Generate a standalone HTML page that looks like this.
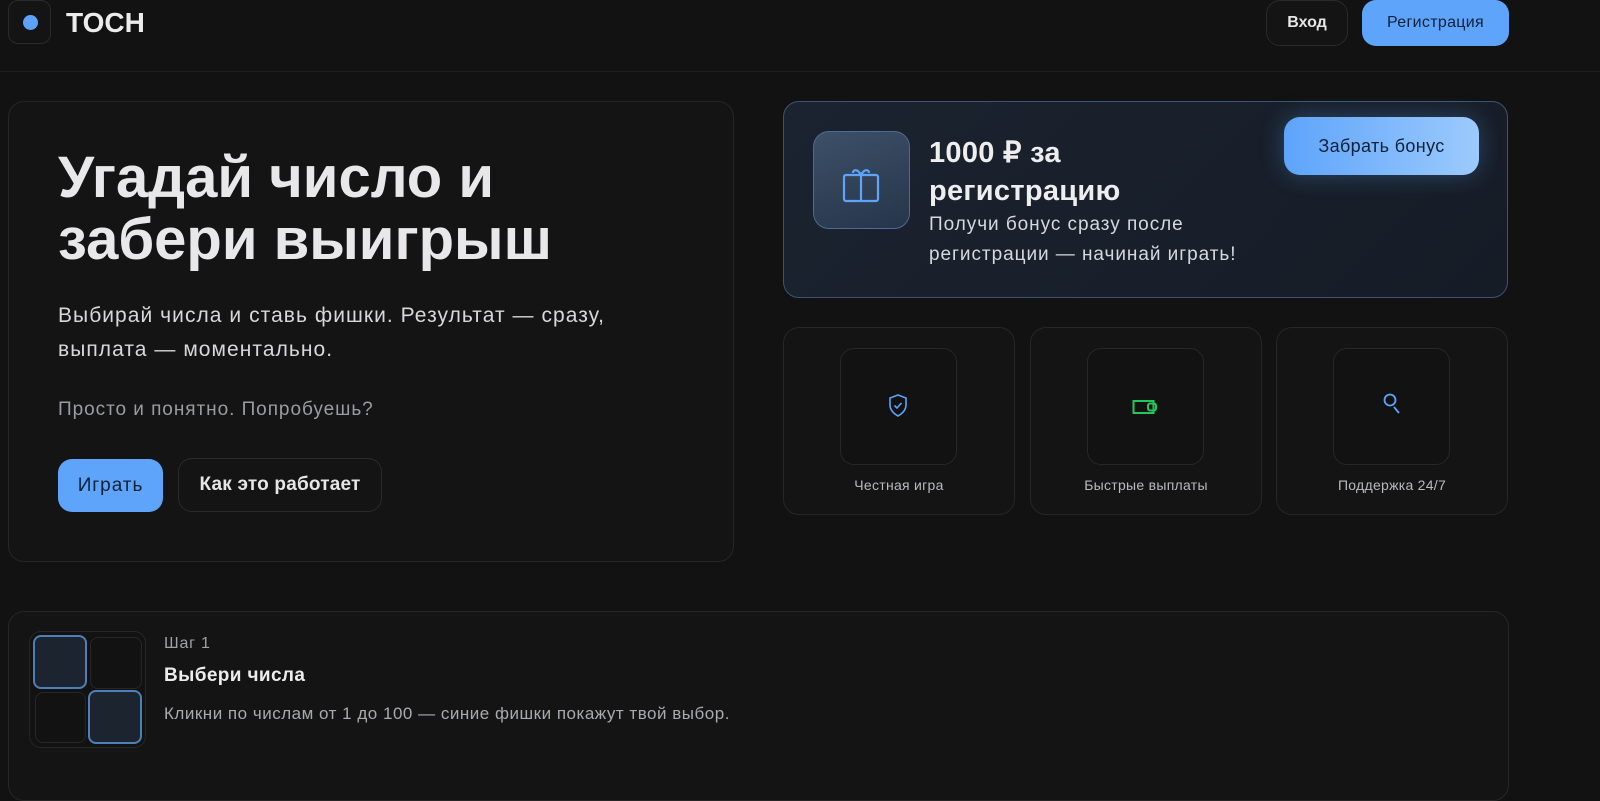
<!DOCTYPE html>
<html><head><meta charset="utf-8"><style>
*{box-sizing:border-box;margin:0;padding:0}
body{width:1600px;height:783px;overflow:hidden;background:#121212;font-family:"Liberation Sans",sans-serif;color:#e8e8ea;position:relative}
.a{position:absolute;letter-spacing:0.05em;white-space:nowrap}
.hdr{left:0;top:71px;width:1600px;height:1px;background:#1f1f1f}
.card{background:#141414;border:1px solid #262626;border-radius:16px}
.btn{display:flex;align-items:center;justify-content:center;border-radius:14px}
</style></head><body>
<div class="a" style="left:8px;top:0;width:43px;height:44px;border:1px solid #2a2a2a;border-radius:10px;background:#141414"></div>
<div class="a" style="left:23px;top:15px;width:15px;height:15px;border-radius:50%;background:#5aa2fa"></div>
<div class="a" style="left:66px;top:7px;font-size:28px;font-weight:bold;letter-spacing:0;color:#ececec">TOCH</div>
<div class="a btn" style="left:1266px;top:0;width:82px;height:46px;border:1px solid #2a2a2a;background:#141414;font-size:16px;font-weight:bold;letter-spacing:0;color:#e6e6e6">Вход</div>
<div class="a btn" style="left:1362px;top:0;width:147px;height:46px;background:#5ea4fb;font-size:16px;letter-spacing:0.02em;color:#10223a">Регистрация</div>
<div class="a hdr"></div>

<div class="a card" style="left:8px;top:101px;width:726px;height:461px"></div>
<div class="a" style="left:58px;top:147px;font-size:58px;font-weight:bold;line-height:62px;color:#e8e8ea;letter-spacing:0">Угадай число и<br>забери выигрыш</div>
<div class="a" style="left:58px;top:299px;font-size:21px;line-height:34px;color:#d8d8dc">Выбирай числа и ставь фишки. Результат — сразу,<br>выплата — моментально.</div>
<div class="a" style="left:58px;top:399px;font-size:19px;color:#9a9ca4">Просто и понятно. Попробуешь?</div>
<div class="a btn" style="left:58px;top:459px;width:105px;height:53px;background:#5ea4fb;font-size:19px;color:#10223a">Играть</div>
<div class="a btn" style="left:178px;top:458px;width:204px;height:54px;border:1px solid #2a2a2a;background:#141414;font-size:19px;font-weight:bold;letter-spacing:0.01em;color:#e6e6e6">Как это работает</div>

<div class="a" style="left:783px;top:101px;width:725px;height:197px;border:1px solid #3a5475;border-radius:16px;background:linear-gradient(135deg,#1b2330,#161c26)"></div>
<div class="a" style="left:813px;top:131px;width:97px;height:98px;border:1px solid #4d6a90;border-radius:16px;background:linear-gradient(160deg,#3d5068,#26354a)"></div>
<svg class="a" style="left:842px;top:167px" width="38" height="36" viewBox="0 0 38 36" fill="none" stroke="#5ea4fb" stroke-width="2.2"><rect x="2" y="8" width="34" height="26" rx="2"/><line x1="19" y1="8" x2="19" y2="34"/><path d="M19 8c-3-6-8-6-8-2M19 8c3-6 8-6 8-2"/></svg>
<div class="a" style="left:929px;top:134px;font-size:29px;font-weight:bold;line-height:38px;letter-spacing:0.01em;color:#eeeeee">1000 ₽ за<br>регистрацию</div>
<div class="a" style="left:929px;top:210px;font-size:19px;line-height:30px;color:#d6d8dc">Получи бонус сразу после<br>регистрации — начинай играть!</div>
<div class="a btn" style="left:1284px;top:117px;width:195px;height:58px;border-radius:16px;background:linear-gradient(90deg,#5ea4fb,#9ccafc);box-shadow:0 0 24px rgba(94,164,251,0.3);font-size:18px;letter-spacing:0.02em;color:#10223a">Забрать бонус</div>

<div class="a card" style="left:783px;top:327px;width:232px;height:188px"></div>
<div class="a card" style="left:1030px;top:327px;width:232px;height:188px"></div>
<div class="a card" style="left:1276px;top:327px;width:232px;height:188px"></div>
<div class="a" style="left:840px;top:348px;width:117px;height:117px;border:1px solid #272727;border-radius:14px;background:#121212"></div>
<div class="a" style="left:1087px;top:348px;width:117px;height:117px;border:1px solid #272727;border-radius:14px;background:#121212"></div>
<div class="a" style="left:1333px;top:348px;width:117px;height:117px;border:1px solid #272727;border-radius:14px;background:#121212"></div>
<svg class="a" style="left:888px;top:393px" width="20" height="25" viewBox="0 0 20 25" fill="none" stroke="#5ea4fb" stroke-width="1.6"><path d="M10 2l8 3v7c0 5-4 9-8 11-4-2-8-6-8-11V5z"/><path d="M6.5 12.5l2.5 2.5 4.5-5"/></svg>
<svg class="a" style="left:1132px;top:399px" width="26" height="16" viewBox="0 0 26 16" fill="none" stroke="#22c55e" stroke-width="2"><rect x="1.5" y="2" width="20" height="12"/><rect x="16" y="4.5" width="8" height="7" rx="2"/></svg>
<svg class="a" style="left:1383px;top:392px" width="22" height="28" viewBox="0 0 22 28" fill="none" stroke="#5ea4fb" stroke-width="1.8"><circle cx="7" cy="8" r="5.5"/><line x1="11" y1="15" x2="16" y2="21"/></svg>
<div class="a" style="left:783px;top:477px;width:232px;text-align:center;font-size:14px;letter-spacing:0.02em;color:#b8bac0">Честная игра</div>
<div class="a" style="left:1030px;top:477px;width:232px;text-align:center;font-size:14px;letter-spacing:0.02em;color:#b8bac0">Быстрые выплаты</div>
<div class="a" style="left:1276px;top:477px;width:232px;text-align:center;font-size:14px;letter-spacing:0.02em;color:#b8bac0">Поддержка 24/7</div>

<div class="a card" style="left:8px;top:611px;width:1501px;height:190px"></div>
<div class="a" style="left:29px;top:631px;width:117px;height:117px;border:1px solid #262626;border-radius:12px;background:#121212"></div>
<div class="a" style="left:33px;top:635px;width:54px;height:54px;border:2px solid #4e7fb8;border-radius:8px;background:#1c2430"></div>
<div class="a" style="left:90px;top:637px;width:52px;height:52px;border:1px solid #262626;border-radius:8px;background:#121212"></div>
<div class="a" style="left:35px;top:692px;width:51px;height:51px;border:1px solid #262626;border-radius:8px;background:#121212"></div>
<div class="a" style="left:88px;top:690px;width:54px;height:54px;border:2px solid #4e7fb8;border-radius:8px;background:#1c2430"></div>
<div class="a" style="left:164px;top:635px;font-size:16px;color:#a0a2a8">Шаг 1</div>
<div class="a" style="left:164px;top:665px;font-size:19px;font-weight:bold;letter-spacing:0.02em;color:#ececec">Выбери числа</div>
<div class="a" style="left:164px;top:704px;font-size:17px;letter-spacing:0.03em;color:#a8aab0">Кликни по числам от 1 до 100 — синие фишки покажут твой выбор.</div>
</body></html>
